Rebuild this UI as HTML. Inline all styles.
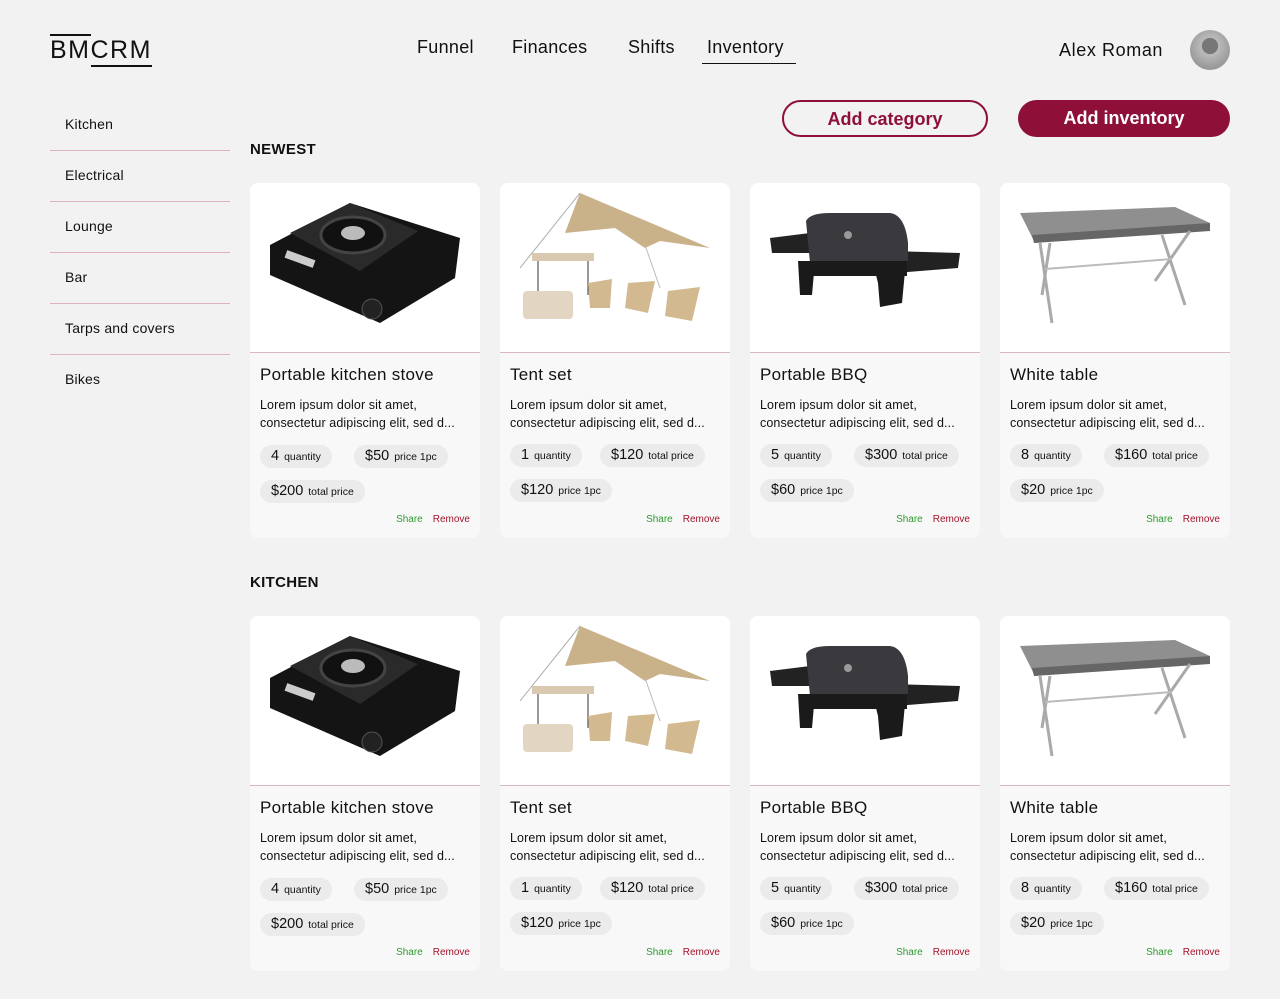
<!DOCTYPE html>
<html><head><meta charset="utf-8"><style>
*{margin:0;padding:0;box-sizing:border-box}
body{width:1280px;height:999px;background:#f2f2f2;font-family:"Liberation Sans",sans-serif;color:#111;position:relative;overflow:hidden}
.abs{position:absolute}
.logo{left:50px;top:36px;font-size:25px;letter-spacing:1.5px;font-weight:400}
.nav{top:37px;font-size:18px;letter-spacing:.3px}
.side{left:50px;width:180px;height:51px;border-bottom:1px solid #e0b3c0;font-size:14px;padding:16px 0 0 15px;letter-spacing:.2px}
.h{left:250px;font-size:15px;font-weight:bold;letter-spacing:.3px}
.btn{height:37px;border-radius:19px;font-weight:bold;font-size:18px;text-align:center;line-height:34px}
.card{width:230px;height:355px;background:#f8f8f8;border-radius:8px;overflow:hidden}
.img{height:170px;background:#fff;border-bottom:1px solid #d9b8c0}
.t{position:absolute;left:10px;top:182px;font-size:17px;letter-spacing:.3px}
.d{position:absolute;left:10px;top:213px;font-size:12.5px;line-height:18px;width:218px;letter-spacing:.1px}
.chip{position:absolute;height:23px;border-radius:12px;background:#ebebeb;font-size:14.5px;line-height:23px;padding:0 11px}
.chip small{font-size:10.5px;margin-left:5px}
.sr{position:absolute;right:10px;top:331px;font-size:10px}
.sr b{font-weight:normal;color:#2e9a2e;margin-right:10px}
.sr i{font-style:normal;color:#a3132b}
</style></head><body>
<div class="abs logo"><span style="border-top:2px solid #111;">BM</span><span style="border-bottom:2px solid #111;padding-bottom:1px">CRM</span></div>
<div class="abs nav" style="left:417px">Funnel</div>
<div class="abs nav" style="left:512px">Finances</div>
<div class="abs nav" style="left:628px">Shifts</div>
<div class="abs nav" style="left:707px">Inventory</div>
<div class="abs" style="left:702px;top:63px;width:94px;height:1px;background:#111"></div>
<div class="abs" style="left:1059px;top:40px;font-size:18px;letter-spacing:.6px">Alex Roman</div>
<div class="abs" style="left:1190px;top:30px;width:40px;height:40px;border-radius:50%;background:radial-gradient(circle at 50% 40%,#777 0 25%,#bbb 27%,#999 70%,#888)"></div>

<div class="abs side" style="top:100px">Kitchen</div>
<div class="abs side" style="top:151px">Electrical</div>
<div class="abs side" style="top:202px">Lounge</div>
<div class="abs side" style="top:253px">Bar</div>
<div class="abs side" style="top:304px">Tarps and covers</div>
<div class="abs side" style="top:355px;border:none">Bikes</div>

<div class="abs btn" style="left:782px;top:100px;width:206px;border:2px solid #8e1039;color:#8e1039">Add category</div>
<div class="abs btn" style="left:1018px;top:100px;width:212px;background:#8e1039;color:#fff;line-height:37px">Add inventory</div>

<div class="abs h" style="top:141px">NEWEST</div>
<div class="abs h" style="top:574px">KITCHEN</div>

<svg width="0" height="0" style="position:absolute"><defs>
<g id="stove"><polygon points="20,62 100,20 210,55 205,95 130,140 20,92" fill="#141414"/><polygon points="40,50 100,20 168,48 110,88" fill="#2a2a2a"/><ellipse cx="103" cy="52" rx="32" ry="18" fill="#111" stroke="#444" stroke-width="3"/><ellipse cx="103" cy="50" rx="12" ry="7" fill="#bbb"/><rect x="35" y="72" width="30" height="8" fill="#ccc" transform="rotate(20 50 76)"/><circle cx="122" cy="126" r="10" fill="#222" stroke="#555"/></g>
<g id="tent"><polygon points="80,10 210,65 160,58 145,65 115,45 65,50" fill="#c9b18a"/><line x1="80" y1="10" x2="20" y2="85" stroke="#aaa"/><line x1="145" y1="62" x2="160" y2="105" stroke="#bbb"/><rect x="32" y="70" width="62" height="8" fill="#d8c9b0"/><line x1="38" y1="78" x2="38" y2="112" stroke="#333"/><line x1="88" y1="78" x2="88" y2="112" stroke="#333"/><rect x="23" y="108" width="50" height="28" rx="4" fill="#e2d6c2"/><polygon points="88,100 112,96 110,125 90,125" fill="#d3b98f"/><polygon points="128,100 155,98 148,130 125,125" fill="#d3b98f"/><polygon points="168,108 200,104 192,138 165,133" fill="#d3b98f"/></g>
<g id="bbq"><polygon points="20,55 60,50 62,70 22,70" fill="#222"/><polygon points="140,68 210,70 208,85 145,90" fill="#222"/><path d="M56 38 Q60 30 80 30 L140 30 Q155 32 158 60 L158 78 L60 80 Z" fill="#3a3a3e"/><rect x="62" y="78" width="95" height="15" fill="#1a1a1a"/><polygon points="48,78 65,78 62,112 50,112" fill="#1a1a1a"/><polygon points="125,88 155,88 152,120 130,124 128,100" fill="#1a1a1a"/><circle cx="98" cy="52" r="4" fill="#999"/></g>
<g id="table"><polygon points="20,30 175,24 210,40 35,60 " fill="#8f8f8f"/><polygon points="32,52 210,40 210,48 34,60" fill="#666"/><line x1="40" y1="60" x2="52" y2="140" stroke="#aaa" stroke-width="3"/><line x1="50" y1="60" x2="42" y2="112" stroke="#aaa" stroke-width="3"/><line x1="162" y1="52" x2="185" y2="122" stroke="#aaa" stroke-width="3"/><line x1="190" y1="48" x2="155" y2="98" stroke="#aaa" stroke-width="3"/><line x1="45" y1="86" x2="172" y2="76" stroke="#bbb" stroke-width="2"/></g>
</defs></svg>

<!-- row 1 -->
<div class="abs card" style="left:250px;top:183px"><div class="img"><svg width="230" height="170"><use href="#stove"/></svg></div>
<div class="t">Portable kitchen stove</div><div class="d">Lorem ipsum dolor sit amet, consectetur adipiscing elit, sed d...</div>
<div class="chip" style="left:10px;top:262px">4<small>quantity</small></div><div class="chip" style="left:104px;top:262px">$50<small>price 1pc</small></div>
<div class="chip" style="left:10px;top:297px">$200<small>total price</small></div><div class="sr"><b>Share</b><i>Remove</i></div></div>

<div class="abs card" style="left:500px;top:183px"><div class="img"><svg width="230" height="170"><use href="#tent"/></svg></div>
<div class="t">Tent set</div><div class="d">Lorem ipsum dolor sit amet, consectetur adipiscing elit, sed d...</div>
<div class="chip" style="left:10px;top:261px">1<small>quantity</small></div><div class="chip" style="left:100px;top:261px">$120<small>total price</small></div>
<div class="chip" style="left:10px;top:296px">$120<small>price 1pc</small></div><div class="sr"><b>Share</b><i>Remove</i></div></div>

<div class="abs card" style="left:750px;top:183px"><div class="img"><svg width="230" height="170"><use href="#bbq"/></svg></div>
<div class="t">Portable BBQ</div><div class="d">Lorem ipsum dolor sit amet, consectetur adipiscing elit, sed d...</div>
<div class="chip" style="left:10px;top:261px">5<small>quantity</small></div><div class="chip" style="left:104px;top:261px">$300<small>total price</small></div>
<div class="chip" style="left:10px;top:296px">$60<small>price 1pc</small></div><div class="sr"><b>Share</b><i>Remove</i></div></div>

<div class="abs card" style="left:1000px;top:183px"><div class="img"><svg width="230" height="170"><use href="#table"/></svg></div>
<div class="t">White table</div><div class="d">Lorem ipsum dolor sit amet, consectetur adipiscing elit, sed d...</div>
<div class="chip" style="left:10px;top:261px">8<small>quantity</small></div><div class="chip" style="left:104px;top:261px">$160<small>total price</small></div>
<div class="chip" style="left:10px;top:296px">$20<small>price 1pc</small></div><div class="sr"><b>Share</b><i>Remove</i></div></div>

<!-- row 2 -->
<div class="abs card" style="left:250px;top:616px"><div class="img"><svg width="230" height="170"><use href="#stove"/></svg></div>
<div class="t">Portable kitchen stove</div><div class="d">Lorem ipsum dolor sit amet, consectetur adipiscing elit, sed d...</div>
<div class="chip" style="left:10px;top:262px">4<small>quantity</small></div><div class="chip" style="left:104px;top:262px">$50<small>price 1pc</small></div>
<div class="chip" style="left:10px;top:297px">$200<small>total price</small></div><div class="sr"><b>Share</b><i>Remove</i></div></div>

<div class="abs card" style="left:500px;top:616px"><div class="img"><svg width="230" height="170"><use href="#tent"/></svg></div>
<div class="t">Tent set</div><div class="d">Lorem ipsum dolor sit amet, consectetur adipiscing elit, sed d...</div>
<div class="chip" style="left:10px;top:261px">1<small>quantity</small></div><div class="chip" style="left:100px;top:261px">$120<small>total price</small></div>
<div class="chip" style="left:10px;top:296px">$120<small>price 1pc</small></div><div class="sr"><b>Share</b><i>Remove</i></div></div>

<div class="abs card" style="left:750px;top:616px"><div class="img"><svg width="230" height="170"><use href="#bbq"/></svg></div>
<div class="t">Portable BBQ</div><div class="d">Lorem ipsum dolor sit amet, consectetur adipiscing elit, sed d...</div>
<div class="chip" style="left:10px;top:261px">5<small>quantity</small></div><div class="chip" style="left:104px;top:261px">$300<small>total price</small></div>
<div class="chip" style="left:10px;top:296px">$60<small>price 1pc</small></div><div class="sr"><b>Share</b><i>Remove</i></div></div>

<div class="abs card" style="left:1000px;top:616px"><div class="img"><svg width="230" height="170"><use href="#table"/></svg></div>
<div class="t">White table</div><div class="d">Lorem ipsum dolor sit amet, consectetur adipiscing elit, sed d...</div>
<div class="chip" style="left:10px;top:261px">8<small>quantity</small></div><div class="chip" style="left:104px;top:261px">$160<small>total price</small></div>
<div class="chip" style="left:10px;top:296px">$20<small>price 1pc</small></div><div class="sr"><b>Share</b><i>Remove</i></div></div>
</body></html>
